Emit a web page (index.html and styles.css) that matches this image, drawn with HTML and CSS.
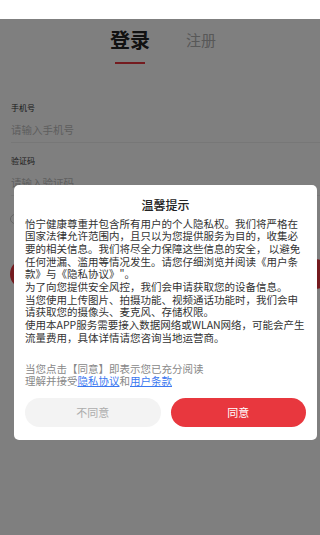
FILE: index.html
```html
<!DOCTYPE html>
<html lang="zh-CN">
<head>
<meta charset="utf-8">
<title>登录</title>
<link rel="stylesheet" href="styles.css">
</head>
<body>
<div class="statusbar"></div>
<div class="screen">
  <div class="tabs">
    <div class="tab active">登录</div>
    <div class="tab">注册</div>
  </div>
  <div class="form">
    <div class="field">
      <div class="label">手机号</div>
      <div class="placeholder">请输入手机号</div>
    </div>
    <div class="field">
      <div class="label">验证码</div>
      <div class="placeholder">请输入验证码</div>
    </div>
    <div class="agree"><span class="check"></span><span class="agree-text">我已阅读并同意《用户条款》和《隐私协议》</span></div>
    <div class="login-btn">登录</div>
  </div>
  <div class="mask">
    <div class="dialog">
      <div class="dialog-title">温馨提示</div>
      <div class="dialog-body">
        <p class="line">怡宁健康尊重并包含所有用户的个人隐私权。我们将严格在</p>
        <p class="line">国家法律允许范围内，且只以为您提供服务为目的，收集必</p>
        <p class="line">要的相关信息。我们将尽全力保障这些信息的安全， 以避免</p>
        <p class="line">任何泄漏、滥用等情况发生。请您仔细浏览并阅读《用户条</p>
        <p class="line">款》与《隐私协议》"。</p>
        <p class="line">为了向您提供安全风控，我们会申请获取您的设备信息。</p>
        <p class="line">当您使用上传图片、拍摄功能、视频通话功能时，我们会申</p>
        <p class="line">请获取您的摄像头、麦克风、存储权限。</p>
        <p class="line">使用本APP服务需要接入数据网络或WLAN网络，可能会产生</p>
        <p class="line">流量费用，具体详情请您咨询当地运营商。</p>
      </div>
      <div class="dialog-consent">
        <p class="line">当您点击【同意】即表示您已充分阅读</p>
        <p class="line">理解并接受<a class="link" href="#">隐私协议</a>和<a class="link" href="#">用户条款</a></p>
      </div>
      <div class="dialog-actions">
        <div class="btn btn-cancel">不同意</div>
        <div class="btn btn-ok">同意</div>
      </div>
    </div>
  </div>
</div>
</body>
</html>
```

FILE: styles.css
```css
* { box-sizing: border-box; }
html, body {
  margin: 0;
  padding: 0;
  width: 320px;
  height: 535px;
  overflow: hidden;
  background: #fff;
  font-family: "Noto Sans CJK SC", "Noto Sans", sans-serif;
}
.statusbar {
  height: 19px;
  background: #fff;
}
.screen {
  position: relative;
  height: 516px;
  overflow: hidden;
  background: #fff;
}
.tabs {
  display: flex;
  justify-content: center;
  align-items: flex-start;
  gap: 36px;
  padding: 7px 0 0 6px;
}
.tab {
  font-size: 15px;
  line-height: 28px;
  color: #b0b0b0;
}
.tab.active {
  font-size: 20px;
  font-weight: 700;
  color: #222;
}
.tab.active::after {
  content: "";
  display: block;
  width: 30px;
  height: 2px;
  margin: 8px auto 0;
  background: #e8373e;
}
.form {
  padding-left: 11px;
}
.field {
  margin-top: 12px;
  padding-bottom: 4px;
  border-bottom: 1px solid #eee;
}
.field:first-child {
  margin-top: 38px;
}
.label {
  font-size: 8px;
  line-height: 12px;
  color: #333;
}
.placeholder {
  margin-top: 8px;
  font-size: 10.5px;
  line-height: 16px;
  color: #bdbdbd;
}
.agree {
  display: flex;
  align-items: center;
  gap: 5px;
  margin-top: 17px;
  margin-left: -1px;
  font-size: 8px;
  color: #999;
}
.check {
  width: 10px;
  height: 10px;
  border-radius: 50%;
  border: 1px solid #ccc;
  background: #fff;
}
.login-btn {
  margin: 35px -10px 0 -1px;
  height: 30px;
  border-radius: 15px;
  background: #e8373e;
  color: #fff;
  font-size: 12px;
  display: flex;
  align-items: center;
  justify-content: center;
}
.mask {
  position: absolute;
  inset: 0;
  background: rgba(0, 0, 0, 0.5);
  padding: 166px 3px 0 14px;
}
.dialog {
  background: #fff;
  border-radius: 5px;
  padding: 11px 11px 13px;
}
.dialog-title {
  text-align: center;
  font-size: 12px;
  line-height: 18px;
  font-weight: 500;
  color: #222;
}
.line {
  margin: 0;
  white-space: nowrap;
}
.dialog-body {
  margin-top: 3.5px;
  font-size: 10.5px;
  line-height: 12.7px;
  color: #333;
}
.dialog-consent {
  margin-top: 18px;
  font-size: 10.5px;
  line-height: 12.7px;
  color: #888;
}
.link {
  color: #3b78f0;
  text-decoration: underline;
}
.dialog-actions {
  display: grid;
  grid-template-columns: 1fr 1fr;
  gap: 10px;
  margin-top: 10.3px;
}
.btn {
  height: 28.4px;
  border-radius: 15px;
  font-size: 11px;
  display: flex;
  align-items: center;
  justify-content: center;
}
.btn-cancel {
  background: #f3f3f3;
  color: #adadad;
}
.btn-ok {
  background: #e8373e;
  color: #fff;
}
```
